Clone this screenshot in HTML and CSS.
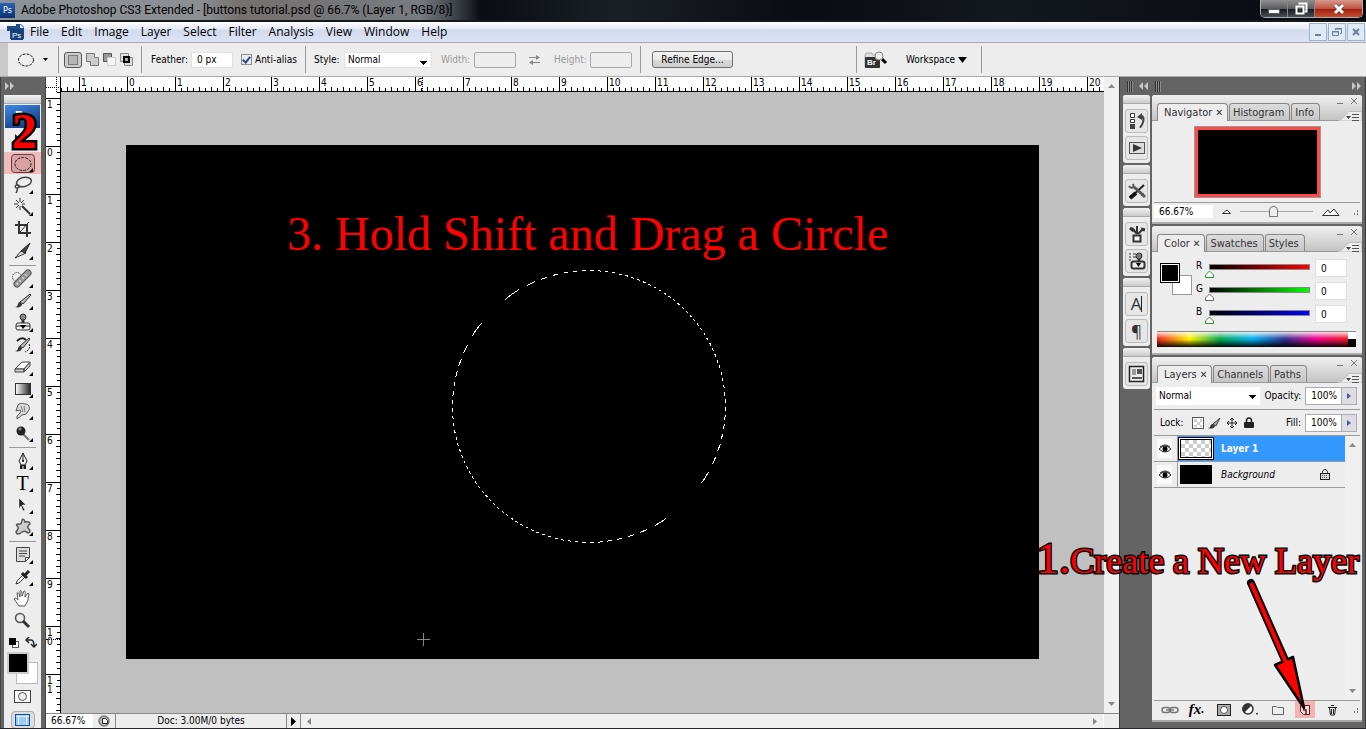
FILE: index.html
```html
<!DOCTYPE html>
<html lang="en">
<head>
  <meta charset="UTF-8">
  <meta name="viewport" content="width=device-width, initial-scale=1.0">
  <title>Adobe Photoshop CS3 Extended</title>
  <link rel="stylesheet" href="styles.css">
</head>
<body>

  <!-- Window title -->
  <header class="title-bar">
    <span class="ps-badge">Ps</span>
    <h1>Adobe Photoshop CS3 Extended - [buttons tutorial.psd @ 66.7% (Layer 1, RGB/8)]</h1>
    <div class="window-buttons">
      <button class="win-btn" aria-label="Minimize"><svg width="14" height="14"><rect x="1.500" y="7.500" width="11" height="4" fill="#fff" stroke="#555a66"/></svg></button>
      <button class="win-btn" aria-label="Restore"><svg width="14" height="14" fill="none"><path d="M4.500 1.500h8v8h-2" stroke="#fff" stroke-width="2"/><rect x="2.500" y="4.500" width="7" height="7" stroke="#fff" stroke-width="2"/><rect x="5" y="7" width="2" height="2" fill="#444"/></svg></button>
      <button class="win-btn close" aria-label="Close"><svg width="14" height="14"><path d="M3 3l8 8M11 3l-8 8" stroke="#5a3030" stroke-width="4"/><path d="M3 3l8 8M11 3l-8 8" stroke="#fff" stroke-width="3"/></svg></button>
    </div>
  </header>

  <!-- Menu -->
  <nav class="menu-bar">
    <svg class="doc-icon" width="17" height="17" viewBox="0 0 17 17"><path d="M0 2h9V0h5l3 3v12H3V7H0z" fill="#1d4c88"/><path d="M13 0l4 4h-4z" fill="#dfe8f5"/><rect x="4" y="5" width="12" height="11" fill="#164079"/><text x="5" y="14" font-size="8" fill="#fff" font-family="Liberation Sans, sans-serif">Ps</text></svg>
    <a href="#">File</a>
    <a href="#">Edit</a>
    <a href="#">Image</a>
    <a href="#">Layer</a>
    <a href="#">Select</a>
    <a href="#">Filter</a>
    <a href="#">Analysis</a>
    <a href="#">View</a>
    <a href="#">Window</a>
    <a href="#">Help</a>
    <div class="mdi-buttons">
      <button aria-label="Minimize document"><svg width="12" height="12"><path d="M3 9h6" stroke="#6b7f99" stroke-width="2"/></svg></button>
      <button aria-label="Restore document"><svg width="12" height="12" fill="none" stroke="#6b7f99"><path d="M4.500 4V2.500h6v5H9M4 3h7"/><path d="M1.500 5.500h6v4h-6zM1 6h7"/></svg></button>
      <button aria-label="Close document"><svg width="12" height="12"><path d="M3 3l6 6M9 3l-6 6" stroke="#6b7f99" stroke-width="2"/></svg></button>
    </div>
  </nav>

  <!-- Tool options -->
  <div class="options-bar">
    <div class="opt opt-tool">
      <svg width="18" height="14"><ellipse cx="9" cy="7" rx="7.500" ry="6" fill="none" stroke="#222" stroke-dasharray="3 1"/></svg>
      <svg width="5" height="3"><path d="M0 0h5L2.500 3z"/></svg>
    </div>
    <div class="opt opt-modes">
      <button class="mode active" aria-label="New selection"><svg width="12" height="12"><rect x="1.500" y="1.500" width="9" height="9" fill="#b5b5b5" stroke="#777"/></svg></button>
      <button class="mode" aria-label="Add to selection"><svg width="13" height="13"><path d="M.5.5h8v4h4v8h-8v-4h-4z" fill="#ccc" stroke="#777"/></svg></button>
      <button class="mode" aria-label="Subtract from selection"><svg width="13" height="13"><path d="M.5.5h8v4h-4v4h-4z" fill="#999" stroke="#555"/><path d="M4.500 4.500h8v8h-8z" fill="#f6f6f6" stroke="#ccc"/></svg></button>
      <button class="mode" aria-label="Intersect with selection"><svg width="13" height="13"><path d="M.5.5h8v8h-8zM4.500 4.500h8v8h-8z" fill="#ddd" stroke="#888"/><path d="M4 4h5v5H4z" fill="#aaa" stroke="#000" stroke-width="2"/></svg></button>
    </div>
    <div class="opt opt-feather">
      <label for="feather">Feather:</label>
      <input type="text" id="feather" class="field feather" value="0 px">
      <input type="checkbox" id="anti" class="tick" checked>
      <label for="anti">Anti-alias</label>
    </div>
    <div class="opt opt-style">
      <label for="style" class="lbl-style">Style:</label>
      <select id="style" class="field drop"><option>Normal</option></select>
      <label for="width" class="lbl-width off">Width:</label>
      <input type="text" id="width" class="field size" disabled>
      <svg class="swap" width="13" height="12" stroke="#888" fill="#888"><path d="M1 3.500h8M4 8.500h8"/><path d="M8 1l4 2.500L8 6zM5 6L1 8.500 5 11z" stroke="none"/></svg>
      <label for="height" class="lbl-height off">Height:</label>
      <input type="text" id="height" class="field size" disabled>
    </div>
    <div class="opt opt-refine"><button class="refine">Refine Edge...</button></div>
    <div class="opt opt-bridge">
      <button class="bridge" aria-label="Go to Bridge"><svg width="24" height="18"><path d="M1 4l1-2h6l1 2h6v12H1z" fill="#ddd" stroke="#aaa"/><rect x="1" y="6" width="15" height="11" rx="1" fill="#333"/><text x="3" y="14" font-size="8" font-weight="bold" fill="#fff" font-family="Liberation Sans, sans-serif">Br</text><path d="M18 8l4 4" stroke="#000" stroke-width="3"/><circle cx="15" cy="5" r="4" fill="#eee" stroke="#888"/></svg></button>
      <button class="workspace">Workspace <svg width="9" height="6"><path d="M0 0h9L4.500 6z"/></svg></button>
    </div>
    <div class="opt"></div>
  </div>

  <main class="work">

    <!-- Toolbox -->
    <aside class="toolbox">
      <div class="tool-head"><svg width="10" height="8" fill="#c8c8c8"><path d="M0 0l4 4-4 4zM5 0l4 4-4 4z"/></svg></div>
      <div class="tools">
        <div class="strip"></div>
        <div class="logo">Ps</div>
        <button class="tool" aria-label="Move"><svg width="24" height="22"><path d="M4 4l10 9H9l-5 5z" fill="#222"/></svg></button>
        <button class="tool marked more" aria-label="Elliptical marquee"><svg width="26" height="22"><rect x="1.500" y="2.500" width="23" height="18" rx="3" fill="#c98f8f" fill-opacity=".6" stroke="#5e3a3a"/><ellipse cx="13" cy="12" rx="8" ry="6.500" fill="none" stroke="#222" stroke-dasharray="3 1"/></svg></button>
        <button class="tool more" aria-label="Lasso"><svg width="24" height="22" fill="none" stroke="#444" stroke-width="1.500"><ellipse cx="13" cy="8" rx="7.500" ry="4.500" transform="rotate(-12 13 8)"/><path d="M7 11c-3-1-4 3-1 3s3-3 0-3M6 14c1 2 0 3-1 5"/></svg></button>
        <button class="tool more" aria-label="Magic wand"><svg width="24" height="22" stroke="#333"><path d="M9 2v4M9 10v4M3 8h4M11 8h3M5 4l3 3M13 4l-3 3M5 12l3-3"/><path d="M11 10l8 8" stroke-width="2"/></svg></button>
        <button class="tool" aria-label="Crop"><svg width="24" height="22" fill="none" stroke="#333" stroke-width="2"><path d="M8 3v12h12M4 7h12v12"/><path d="M9 14l9-10" stroke-width="1"/></svg></button>
        <button class="tool more" aria-label="Slice"><svg width="24" height="22"><path d="M4 18l7-8 4 3z" fill="#ddd" stroke="#333"/><path d="M10 11l9-8-5 10z" fill="#444" stroke="#222"/></svg></button>
        <hr>
        <button class="tool more" aria-label="Healing brush"><svg width="24" height="22"><circle cx="6" cy="9" r="4.500" fill="none" stroke="#222" stroke-dasharray="1 1"/><path d="M6 16L17 5" stroke="#555" stroke-width="7" stroke-linecap="round"/><path d="M6 16L17 5" stroke="#999" stroke-width="5" stroke-linecap="round"/><path d="M6 16L17 5" stroke="#eee" stroke-width="2" stroke-dasharray="1 3"/></svg></button>
        <button class="tool more" aria-label="Brush"><svg width="24" height="22"><path d="M4 17c4 0 2-5 5-5l2 2c0 3-4 4-7 3z" fill="#333"/><path d="M9 12l10-8 1 1-8 9z" fill="#bbb" stroke="#333"/></svg></button>
        <button class="tool more" aria-label="Clone stamp"><svg width="24" height="22"><circle cx="12" cy="5" r="3" fill="#888" stroke="#333"/><path d="M12 8v4" stroke="#333" stroke-width="3"/><rect x="5" y="11" width="14" height="7" rx="2" fill="#eee" stroke="#333"/><path d="M5 14h14" stroke="#333"/><path d="M9 13h6l-3 4z"/></svg></button>
        <button class="tool more" aria-label="History brush"><svg width="24" height="22"><path d="M4 17c4 0 2-4 5-5l2 2c0 3-4 4-7 3z" fill="#333"/><path d="M9 12l9-8 1 1-7 9z" fill="#bbb" stroke="#333"/><path d="M6 7c4-4 7-3 9-1" fill="none" stroke="#222" stroke-width="2"/><path d="M18 10c2 4-1 7-4 8" fill="none" stroke="#222" stroke-dasharray="2 1"/></svg></button>
        <button class="tool more" aria-label="Eraser"><svg width="24" height="22" stroke="#444"><path d="M4 13l7-7h8l-6 7z" fill="#fff"/><path d="M4 13h9v3H4zM13 13l6-7v4l-6 6z" fill="#ccc"/></svg></button>
        <button class="tool more" aria-label="Gradient"><svg width="24" height="22"><defs><linearGradient id="bw"><stop offset="0" stop-color="#fff"/><stop offset="1" stop-color="#222"/></linearGradient></defs><rect x="4.500" y="5.500" width="15" height="11" fill="url(#bw)" stroke="#333"/></svg></button>
        <button class="tool more" aria-label="Smudge"><svg width="24" height="22"><path d="M7 5c3-3 6-1 7-1 4 0 5 3 4 6l-3 4-4 1-5 4v-3l4-4-1-2-4 1z" fill="#ddd" stroke="#555"/><path d="M10 6l2 6M13 6l1 6" stroke="#777"/></svg></button>
        <button class="tool more" aria-label="Burn"><svg width="24" height="22"><path d="M12 12l6 6" stroke="#777" stroke-width="2"/><circle cx="10" cy="9" r="4.500" fill="#222"/><circle cx="9" cy="7" r="1.500" fill="#888"/></svg></button>
        <hr>
        <button class="tool more" aria-label="Pen"><svg width="24" height="22"><path d="M12 3l4 8-2 4h-4l-2-4z" fill="#eee" stroke="#222"/><path d="M12 3v8" stroke="#222"/><circle cx="12" cy="11" r="1"/><path d="M9 15h6v4H9z" fill="#222"/><path d="M12 16v3" stroke="#eee"/></svg></button>
        <button class="tool more type" aria-label="Type">T</button>
        <button class="tool more" aria-label="Path selection"><svg width="24" height="22"><path d="M8 4l7 7h-4l3 5-2 1-2-5-2 3z" fill="#222" stroke="#fff" stroke-width=".5"/></svg></button>
        <button class="tool more" aria-label="Custom shape"><svg width="24" height="22"><path d="M11 4q2-2 3 2 5-1 5 2-3 2-2 4 4 4 0 5-3-3-6-1-5 4-6 0 3-4 2-5-3-3 0-3 4 1 4-4z" fill="#ccc" stroke="#555" stroke-width="1.500"/></svg></button>
        <hr>
        <button class="tool more" aria-label="Notes"><svg width="24" height="22"><path d="M5.500 3.500h13v10l-4 4h-9z" fill="#ddd" stroke="#444"/><path d="M8 7h8M8 9.500h8M8 12h6" stroke="#444"/><path d="M14.500 17.500v-4h4z" fill="#fff" stroke="#444"/></svg></button>
        <button class="tool more" aria-label="Eyedropper"><svg width="24" height="22"><path d="M5 18l1-3 7-7 2 2-7 7z" fill="#fff" stroke="#333"/><path d="M11 7l5 5M14 9l4-4" stroke="#222" stroke-width="3"/></svg></button>
        <button class="tool" aria-label="Hand"><svg width="24" height="22"><path d="M8 18l-5-7c1-2 3 0 4 1L6 5c1-1 2 0 3 4V3c1-1 2 0 2 5l2-5c2 0 1 2 1 6l3-4c2 1 0 3 0 7l-3 6z" fill="#fff" stroke="#555"/></svg></button>
        <button class="tool" aria-label="Zoom"><svg width="24" height="22"><circle cx="9" cy="8" r="4.500" fill="#eee" stroke="#555" stroke-width="1.500"/><path d="M12 11l6 6" stroke="#333" stroke-width="3"/></svg></button>
        <div class="minis">
          <svg width="12" height="12"><rect x="4.500" y="4.500" width="6" height="6" fill="#fff" stroke="#555"/><rect x="1" y="1" width="7" height="7"/></svg>
          <svg width="12" height="12" fill="none" stroke="#222" stroke-width="1.500"><path d="M2 3h4q3 0 3 6"/><path d="M4 0L1 3l3 3M6 7l3 3 3-3"/></svg>
        </div>
        <div class="inks"><span class="ink back"></span><span class="ink front"></span></div>
        <button class="mask" aria-label="Quick mask"><svg width="17" height="13"><rect x=".5" y=".5" width="16" height="12" fill="#fff" stroke="#444"/><circle cx="8.500" cy="6.500" r="4" fill="#eee" stroke="#555"/></svg></button>
        <button class="screen" aria-label="Screen mode"><svg width="16" height="14"><rect x=".5" y="1.500" width="14" height="11" fill="#9cccf5" stroke="#124f96"/><path d="M1 3.500h13M3.500 2v10M11.500 2v10" stroke="#e6f3ff"/></svg></button>
      </div>
    </aside>

    <!-- Document window -->
    <section class="document">
      <div class="corner"></div>
      <div class="ruler-h">
        <span>1</span><span>0</span><span>1</span><span>2</span><span>3</span><span>4</span><span>5</span><span>6</span><span>7</span><span>8</span><span>9</span><span>10</span><span>11</span><span>12</span><span>13</span><span>14</span><span>15</span><span>16</span><span>17</span><span>18</span><span>19</span><span>20</span>
        <i class="track-x"></i>
      </div>
      <div class="scroll-v">
        <svg width="7" height="4"><path d="M0 4h7L3.500 0z" fill="#888"/></svg>
        <svg width="7" height="4"><path d="M0 0h7L3.500 4z" fill="#888"/></svg>
      </div>
      <div class="ruler-v">
        <span>1</span><span>0</span><span>1</span><span>2</span><span>3</span><span>4</span><span>5</span><span>6</span><span>7</span><span>8</span><span>9</span><span>1<br>0</span><span>1<br>1</span>
        <i class="track-y"></i>
      </div>
      <div class="stage">
        <div class="canvas">
          <p class="step-three">3. Hold Shift and Drag a Circle</p>
          <svg class="selection" width="280" height="280">
            <defs>
              <linearGradient id="ants" gradientUnits="userSpaceOnUse" x1=".8" y1=".8" x2="4.800" y2="4.800" spreadMethod="repeat">
                <stop offset="0" stop-color="#fff"/><stop offset=".5" stop-color="#fff"/>
                <stop offset=".5" stop-color="#000"/><stop offset="1" stop-color="#000"/>
              </linearGradient>
            </defs>
            <ellipse cx="140" cy="140.500" rx="136.500" ry="136" fill="none" stroke="url(#ants)" shape-rendering="crispEdges"/>
          </svg>
          <svg class="cross" width="13" height="13"><path d="M6.500 0v13M0 6.500h13" stroke="#888"/></svg>
        </div>
      </div>
      <footer class="status">
        <input type="text" class="zoom-level" value="66.67%" aria-label="Zoom level">
        <span class="cue"><svg width="12" height="12"><circle cx="6" cy="6" r="5" fill="#bbb" stroke="#777" stroke-width="1.500"/><path d="M4.500 3.500h3l2 2v3h-5z" fill="#fff" stroke="#222"/></svg></span>
        <span class="doc-size">Doc: 3.00M/0 bytes</span>
        <button class="doc-menu" aria-label="Status menu"><svg width="5" height="9"><path d="M0 0l5 4.500L0 9z"/></svg></button>
        <div class="scroll-h">
          <svg width="4" height="7"><path d="M4 0v7L0 3.500z" fill="#888"/></svg>
          <svg width="4" height="7"><path d="M0 0v7l4-3.500z" fill="#888"/></svg>
        </div>
      </footer>
    </section>

    <!-- Panel dock -->
    <aside class="dock">
      <div class="dock-head">
        <i class="grip"></i>
        <svg width="10" height="8" fill="#c8c8c8"><path d="M4 0L0 4l4 4zM9 0L5 4l4 4z"/></svg>
        <i class="grip"></i>
        <svg class="collapse" width="10" height="8" fill="#c8c8c8"><path d="M0 0l4 4-4 4zM5 0l4 4-4 4z"/></svg>
      </div>
      <div class="dock-body">
        <div class="icon-col">
          <div class="icon-group">
            <button aria-label="History"><svg width="18" height="18"><path d="M2.500 1.500h4v4h-4zM2.500 7.500h4v3h-4z" fill="#fff" stroke="#333"/><rect x="2" y="12" width="5" height="5" fill="#444"/><path d="M9 5l5-4v2c4 1 3 8-1 13-2 0-2-1-1-2 2-3 3-6 2-8v2z" fill="#444"/></svg></button>
            <button aria-label="Actions"><svg width="18" height="18"><rect x="1.500" y="3.500" width="15" height="11" fill="#ddd" stroke="#555"/><path d="M5 5l9 4-9 4z" fill="#333"/></svg></button>
          </div>
          <div class="icon-group">
            <button aria-label="Tool presets"><svg width="18" height="18"><path d="M2 16L16 3" stroke="#222" stroke-width="2"/><path d="M6 5l9 8" stroke="#555" stroke-width="3"/><path d="M14 12l3 3" stroke="#555" stroke-width="3"/><path d="M2 16l6-5" stroke="#111" stroke-width="4"/><path d="M1 4c2 3 6 2 4-2" fill="none" stroke="#555" stroke-width="2"/></svg></button>
          </div>
          <div class="icon-group">
            <button aria-label="Brushes"><svg width="18" height="18" stroke="#333"><path d="M9 9L4 3M9 9V1M10 9l5-5" stroke-width="2"/><path d="M2 3l4 3M13 4l4 1" stroke-width="3"/><rect x="5.500" y="10.500" width="7" height="6" fill="#fff" stroke-width="2"/></svg></button>
            <button aria-label="Clone source"><svg width="18" height="18"><path d="M1 2h2M5 2h3M1 5h2M5 5h3M1 8h2" stroke="#333"/><circle cx="11" cy="4" r="3" fill="#777" stroke="#333"/><path d="M11 7v3" stroke="#333" stroke-width="3"/><rect x="3.500" y="9.500" width="13" height="7" rx="2" fill="#eee" stroke="#333" stroke-width="2"/><path d="M8 11h5l-2.500 4z"/></svg></button>
          </div>
          <div class="icon-group">
            <button aria-label="Character">A<b></b></button>
            <button aria-label="Paragraph">¶</button>
          </div>
          <div class="icon-group">
            <button aria-label="Layer comps"><svg width="18" height="18"><rect x="1.500" y="1.500" width="14" height="15" fill="#eee" stroke="#222" stroke-width="1.500"/><path d="M4 5h4M4 7h4M4 9h4" stroke="#444"/><path d="M9 4h5v5H9zM4 12h10v2H4z" fill="#555"/></svg></button>
          </div>
        </div>

        <div class="panels">
          <section class="panel navigator">
            <div class="tabs">
              <button class="tab on">Navigator <span>✕</span></button><button class="tab">Histogram</button><button class="tab">Info</button>
              <span class="panel-ctl"><svg width="22" height="9" fill="none" stroke="#777"><path d="M0 6.500h6"/><path d="M14 1l6 6M20 1l-6 6"/></svg></span>
              <span class="panel-menu"><svg width="24" height="10"><path d="M0 9.500h2L11 .5h13V10H0z" fill="#ededed" stroke="#bbb"/><path d="M8 5h5l-2.500 3z" fill="#444"/><path d="M14 3.500h7M14 6.500h7M14 9.500h7" stroke="#555"/></svg></span>
            </div>
            <div class="nav-view"><div class="nav-thumb"></div></div>
            <div class="nav-foot">
              <input type="text" value="66.67%" aria-label="Navigator zoom">
              <svg width="9" height="5"><path d="M.5 4.500h8L5 1z" fill="#fff" stroke="#333"/></svg>
              <input type="range" min="0" max="100" value="46" aria-label="Zoom slider">
              <svg width="18" height="8"><path d="M.5 7.500L6 2l2 3 4-4 5 6.500z" fill="#fff" stroke="#333"/></svg>
              <i class="resize"></i>
            </div>
          </section>

          <section class="panel color">
            <div class="tabs">
              <button class="tab on">Color <span>✕</span></button><button class="tab">Swatches</button><button class="tab">Styles</button>
              <span class="panel-ctl"><svg width="22" height="9" fill="none" stroke="#777"><path d="M0 6.500h6"/><path d="M14 1l6 6M20 1l-6 6"/></svg></span>
              <span class="panel-menu"><svg width="24" height="10"><path d="M0 9.500h2L11 .5h13V10H0z" fill="#ededed" stroke="#bbb"/><path d="M8 5h5l-2.500 3z" fill="#444"/><path d="M14 3.500h7M14 6.500h7M14 9.500h7" stroke="#555"/></svg></span>
            </div>
            <div class="mixer">
              <div class="pair"><span class="chip back"></span><span class="chip front"></span></div>
              <div class="channels">
                <div class="channel"><label for="r">R</label><div class="ramp red"><svg width="9" height="8"><path d="M4.500 1L8.500 5v2.500h-8V5z" fill="#fff" stroke="#2a9c2a"/></svg></div><input type="text" id="r" value="0"></div>
                <div class="channel"><label for="g">G</label><div class="ramp green"><svg width="9" height="8"><path d="M4.500 1L8.500 5v2.500h-8V5z" fill="#fff" stroke="#666"/></svg></div><input type="text" id="g" value="0"></div>
                <div class="channel"><label for="b">B</label><div class="ramp blue"><svg width="9" height="8"><path d="M4.500 1L8.500 5v2.500h-8V5z" fill="#fff" stroke="#2a9c2a"/></svg></div><input type="text" id="b" value="0"></div>
              </div>
            </div>
            <div class="spectrum"><div class="hues"></div><div class="ends"></div></div>
          </section>

          <section class="panel layers">
            <div class="tabs">
              <button class="tab on">Layers <span>✕</span></button><button class="tab">Channels</button><button class="tab">Paths</button>
              <span class="panel-ctl"><svg width="22" height="9" fill="none" stroke="#777"><path d="M0 6.500h6"/><path d="M14 1l6 6M20 1l-6 6"/></svg></span>
              <span class="panel-menu"><svg width="24" height="10"><path d="M0 9.500h2L11 .5h13V10H0z" fill="#ededed" stroke="#bbb"/><path d="M8 5h5l-2.500 3z" fill="#444"/><path d="M14 3.500h7M14 6.500h7M14 9.500h7" stroke="#555"/></svg></span>
            </div>
            <div class="layer-opts blending">
              <select class="drop blend" aria-label="Blend mode"><option>Normal</option></select>
              <label for="opacity">Opacity:</label>
              <span class="percent"><input type="text" id="opacity" value="100%"><button aria-label="Opacity slider"><svg width="4" height="6"><path d="M0 0l4 3-4 3z" fill="#4a5a9a"/></svg></button></span>
            </div>
            <div class="layer-opts locks">
              <span class="lock-label">Lock:</span>
              <button aria-label="Lock transparent pixels"><svg width="12" height="12"><rect x=".5" y=".5" width="11" height="11" fill="#fff" stroke="#555"/><path d="M2 2h3v3H2zM5 5h3v3H5zM8 2h2v3H8zM2 8h3v2H2zM8 8h2v2H8z" fill="#ccc"/></svg></button>
              <button aria-label="Lock image pixels"><svg width="13" height="12"><path d="M0 11c4 0 1-4 5-4l2 2c-1 3-5 3-7 2z" fill="#333"/><path d="M5 7l7-6-4 8z" fill="#aaa" stroke="#444"/></svg></button>
              <button aria-label="Lock position"><svg width="12" height="12"><path d="M6 1v10M1 6h10M4 3l2-2 2 2M4 9l2 2 2-2M3 4L1 6l2 2M9 4l2 2-2 2" fill="none" stroke="#222"/></svg></button>
              <button aria-label="Lock all"><svg width="10" height="12"><path d="M2.500 6V4c0-4 5-4 5 0v2" fill="none" stroke="#222" stroke-width="1.500"/><rect x="0" y="5" width="10" height="6" rx="1" fill="#222"/></svg></button>
              <label for="fill" class="fill-label">Fill:</label>
              <span class="percent"><input type="text" id="fill" value="100%"><button aria-label="Fill slider"><svg width="4" height="6"><path d="M0 0l4 3-4 3z" fill="#4a5a9a"/></svg></button></span>
            </div>
            <div class="layer-area">
              <ul class="layer-list">
                <li class="layer selected">
                  <span class="eye"><svg width="12" height="9"><path d="M0 5q6-6 12 0-6 6-12 0z" fill="#fff" stroke="#222"/><path d="M1 3q5-4 10 0" fill="none" stroke="#222"/><circle cx="6" cy="5" r="2.500"/></svg></span>
                  <span class="frame"><span class="thumb checker"></span></span>
                  <span class="name">Layer 1</span>
                </li>
                <li class="layer">
                  <span class="eye"><svg width="12" height="9"><path d="M0 5q6-6 12 0-6 6-12 0z" fill="#fff" stroke="#222"/><path d="M1 3q5-4 10 0" fill="none" stroke="#222"/><circle cx="6" cy="5" r="2.500"/></svg></span>
                  <span class="frame"><span class="thumb"></span></span>
                  <span class="name">Background</span>
                  <svg class="padlock" width="10" height="11"><path d="M2.500 5V3.500c0-4 5-4 5 0V5" fill="none" stroke="#222"/><rect x=".5" y="4.500" width="9" height="6" fill="#ddd" stroke="#222"/><path d="M2 6.500h6M2 8.500h6" stroke="#555" stroke-dasharray="1 1"/></svg>
                </li>
              </ul>
              <div class="layer-scroll">
                <svg width="7" height="4"><path d="M0 4h7L3.500 0z" fill="#888"/></svg>
                <svg width="7" height="4"><path d="M0 0h7L3.500 4z" fill="#888"/></svg>
              </div>
            </div>
            <div class="layer-foot">
              <button aria-label="Link layers"><svg width="18" height="8" fill="none" stroke="#777" stroke-width="1.500"><rect x="1" y="1.500" width="8" height="5" rx="2.500"/><rect x="9" y="1.500" width="8" height="5" rx="2.500"/><path d="M5 4h8"/></svg></button>
              <button class="fx" aria-label="Layer style">fx<small>.</small></button>
              <button aria-label="Layer mask"><svg width="14" height="12"><rect x=".5" y=".5" width="13" height="11" fill="#aaa" stroke="#222"/><circle cx="7" cy="6" r="3.500" fill="#fff" stroke="#555"/></svg></button>
              <button aria-label="Adjustment layer"><svg width="17" height="13"><circle cx="6" cy="6" r="5" fill="#fff" stroke="#333" stroke-width="1.500"/><path d="M10 2L2 10A5 5 0 0 1 10 2z" fill="#333"/><path d="M14 10h2l-1 2z"/></svg></button>
              <button aria-label="New group"><svg width="12" height="10"><path d="M.5 1.500h4l1 1h6v7H.5z" fill="#eee" stroke="#666"/></svg></button>
              <button class="new-layer" aria-label="New layer"><svg width="12" height="12"><path d="M1.500 1.500h9v9h-6l-3-3z" fill="#ffd9d9" stroke="#5b2222"/><path d="M4 6h3v4" fill="none" stroke="#5b2222" stroke-width="1.500"/></svg></button>
              <button aria-label="Delete layer"><svg width="11" height="12" fill="none" stroke="#222"><path d="M1 3.500h9M4 1.500h3M2.500 4l1 7h4l1-7M4.500 5v5M6.500 5v5"/></svg></button>
              <i class="resize"></i>
            </div>
          </section>
        </div>
      </div>
    </aside>
  </main>

  <!-- Tutorial notes lying over the window -->
  <span class="note step-two">2</span>
  <span class="note step-one"><b>1.</b>Create a New Layer</span>
  <svg class="arrow" width="64" height="134"><path d="M6 5L40 82" stroke="#000" stroke-width="8" stroke-linecap="round"/><path d="M30 87l18-8 11 51z" fill="red" stroke="#000" stroke-width="2.500" stroke-linejoin="round"/><path d="M6 5L42 87" stroke="red" stroke-width="4"/></svg>

</body>
</html>
```

FILE: styles.css
```css
*,
*::before,
*::after {
  box-sizing: border-box;
}

body {
  margin: 0;
  height: 100vh;
  display: flex;
  flex-direction: column;
  overflow: hidden;
  position: relative;
  background: #ededed;
  border-bottom: 1px solid #26262c;
  font-family: "DejaVu Sans Condensed", "Open Sans", sans-serif;
  font-size: 10px;
  line-height: 14px;
  color: #000;
}

button, input, select {
  font: inherit;
  color: inherit;
  margin: 0;
  padding: 0;
  border: none;
  background: none;
  border-radius: 0;
}

button {
  display: flex;
  align-items: center;
  justify-content: center;
}

svg {
  display: block;
  flex: none;
}

/* Title bar */
.title-bar {
  height: 22px;
  flex: none;
  display: flex;
  align-items: center;
  gap: 6px;
  background: linear-gradient(90deg, #8b9299 0, #8c8f92 200px, #74706e 240px, #777b80 420px, #3a3f44 458px, #0a0e12 480px, #1b2026 620px, #090c10 800px, #14191e 1000px, #06090d 100%);
  border-bottom: 2px solid #15171a;
}

.title-bar h1 {
  margin: 0;
  font: normal 12px/20px Roboto, sans-serif;
  white-space: nowrap;
}

.ps-badge {
  width: 15px;
  height: 15px;
  background: linear-gradient(#2b63b4, #0c2f6e);
  color: #fff;
  font-size: 9px;
  text-align: center;
}

.window-buttons {
  display: flex;
  align-self: flex-start;
  margin: 0 3px 0 auto;
  height: 18px;
  border: 1px solid #a9aeb3;
  border-top: none;
  border-radius: 0 0 5px 5px;
  overflow: hidden;
}

.win-btn {
  width: 27px;
  border-right: 1px solid #888;
  background: linear-gradient(#8f8f90, #5d5d60 50%, #191b20 55%, #4b4e53);
}

.win-btn.close {
  width: 47px;
  border: none;
  background: linear-gradient(#d79a8e, #c0513f 50%, #a32110 55%, #c74c2c);
}

/* Menu bar */
.menu-bar {
  height: 20px;
  flex: none;
  display: flex;
  align-items: center;
  gap: 12px;
  padding-left: 7px;
  background: linear-gradient(#fff, #e4e9f5 35%, #d3daed 40%, #dde3f6);
  font: 12px/18px "Open Sans", sans-serif;
}

.menu-bar a {
  color: #000;
  text-decoration: none;
}

.doc-icon {
  margin-right: -6px;
}

.mdi-buttons {
  display: flex;
  gap: 1px;
  margin: 0 1px 0 auto;
}

.mdi-buttons button {
  width: 18px;
  height: 18px;
  border: 1px solid #9fb2c8;
  background: #dfeaf7;
}

/* Options bar */
.options-bar {
  height: 35px;
  flex: none;
  display: grid;
  grid-template-columns: 58px 83px 164px 335px 216px 125px 1fr;
  align-items: center;
  border-top: 1px solid #aaa;
  border-bottom: 1px solid #aaa;
  background: #ededed;
}

.opt {
  height: 27px;
  display: flex;
  align-items: center;
  border-left: 1px solid #999;
}

.opt-tool {
  height: 33px;
  border-left: 8px solid #c9c9c9;
  padding-left: 9px;
  gap: 8px;
}

.opt-modes {
  padding-left: 5px;
  gap: 4px;
}

.mode.active {
  width: 18px;
  height: 16px;
  border: 1px solid #555;
  border-radius: 3px;
  background: #ccc;
}

.opt-feather {
  padding-left: 9px;
}

.opt label {
  white-space: nowrap;
}

.off {
  color: #999;
}

.field {
  height: 16px;
  background: #fff;
  border: 1px solid #e2e3ea;
}

.feather {
  width: 42px;
  margin: 0 8px 0 3px;
  padding-left: 5px;
}

.tick {
  appearance: none;
  width: 11px;
  height: 11px;
  margin-right: 3px;
  border: 1px solid #8e8f8f;
  background: #e8eaf0;
}

.tick:checked::before {
  content: "";
  display: block;
  width: 5px;
  height: 8px;
  margin-left: 2px;
  border: solid #2b4b8e;
  border-width: 0 2px 2px 0;
  transform: rotate(40deg);
}

.opt-style {
  padding-left: 8px;
}

.lbl-style {
  width: 30px;
}

.lbl-width {
  width: 33px;
  margin-left: 9px;
}

.lbl-height {
  width: 36px;
  margin-left: 13px;
}

.drop {
  appearance: none;
  width: 88px;
  padding-left: 3px;
  background-color: #fff;
  background-image: linear-gradient(to bottom right, #000 50%, transparent 50%), linear-gradient(to bottom left, #000 50%, transparent 50%);
  background-repeat: no-repeat;
  background-size: 4px 4px;
  background-position: right 3px top 8px, right 7px top 8px;
}

.size {
  width: 42px;
  border: 1px solid #aaa;
  border-radius: 2px;
  background: #ededed;
}

.swap {
  margin-left: 12px;
}

.opt-refine {
  padding-left: 11px;
}

.refine {
  width: 81px;
  height: 17px;
  border: 1px solid #707070;
  border-radius: 3px;
  background: linear-gradient(#f2f2f2, #e9e9e9 50%, #d8d8d8 55%, #cfcfcf);
}

.opt-bridge {
  padding-left: 7px;
  gap: 18px;
}

.workspace {
  gap: 3px;
}

/* Work area */
.work {
  flex: 1;
  min-height: 0;
  display: flex;
}

/* Toolbox */
.toolbox {
  width: 46px;
  flex: none;
  display: flex;
  flex-direction: column;
  padding: 0 4px;
  background: #646464;
  border-right: 1px solid #444;
  border-left: 1px solid #444;
}

.tool-head {
  height: 18px;
  flex: none;
  display: flex;
  align-items: center;
}

.tools {
  flex: 1;
  min-height: 0;
  margin: 0 0 0 -1px;
  overflow: hidden;
  background: #ededed;
}

.strip {
  height: 9px;
  margin-bottom: 1px;
  border-radius: 3px 3px 0 0;
  border-bottom: 1px solid #aaa;
  background: linear-gradient(#f4f4f4, #cfcfcf);
}

.logo {
  height: 23px;
  margin: 0 1px 2px;
  background: linear-gradient(160deg, #3f8aea, #0c2f6e);
  color: #fff;
  font-size: 13px;
  font-weight: bold;
  line-height: 22px;
  text-align: center;
}

.tool {
  width: 100%;
  height: 22px;
  position: relative;
}

.tool.marked {
  background: #f3bcbc;
}

.tool.more::after {
  content: "";
  position: absolute;
  right: 8px;
  bottom: 2px;
  border: 2px solid #000;
  border-top-color: transparent;
  border-left-color: transparent;
}

.type {
  font: 20px/22px "Liberation Serif", serif;
}

.tools hr {
  height: 1px;
  margin: 3px 5px 2px;
  border: none;
  background: #999;
}

.minis {
  display: flex;
  gap: 5px;
  margin: 5px 0 0 4px;
}

.inks {
  position: relative;
  width: 31px;
  height: 32px;
  margin: 3px 0 6px 3px;
}

.ink {
  position: absolute;
  width: 22px;
  height: 22px;
  border: 1px solid #bbb;
  background: #fff;
}

.ink.back {
  right: 0;
  bottom: 0;
}

.ink.front {
  top: 0;
  left: 0;
  border: 2px solid #ccc;
  background: #000;
}

.mask {
  margin: 0 auto 8px;
}

.screen {
  width: 24px;
  height: 18px;
  margin: 0 auto;
  border: 1px solid #aaa;
  border-radius: 4px;
  background: #ddd;
}

/* Document, rulers and scroll bars */
.document {
  flex: 1;
  min-width: 0;
  display: grid;
  grid-template: 15px 1fr 15px / 15px 1fr 15px;
}

.corner {
  background: linear-gradient(90deg, #000 50%, transparent 50%) 0 10px / 2px 1px repeat-x, linear-gradient(#000 50%, transparent 50%) 10px 0 / 1px 2px repeat-y, #fff;
}

.ruler-h {
  position: relative;
  display: flex;
  padding-left: 18px;
  overflow: hidden;
  border-left: 1px solid #000;
  border-bottom: 1px solid #000;
  margin-left: -1px;
  background: linear-gradient(90deg, #000 1px, transparent 1px) 0 11px / 6px 3px repeat-x, linear-gradient(90deg, #000 1px, transparent 1px) 18px 10px / 12px 4px repeat-x, #fff;
}

.ruler-h span {
  width: 48px;
  height: 14px;
  flex: none;
  padding-left: 1px;
  border-left: 1px solid #000;
  line-height: 11px;
}

.ruler-v {
  grid-column: 1;
  grid-row: 2;
  position: relative;
  padding-top: 6px;
  overflow: hidden;
  border-right: 1px solid #000;
  background: linear-gradient(#000 1px, transparent 1px) 11px 0 / 3px 6px repeat-y, linear-gradient(#000 1px, transparent 1px) 10px 6px / 4px 12px repeat-y, #fff;
}

.ruler-v span {
  display: block;
  height: 48px;
  padding: 1px 0 0 1px;
  border-top: 1px solid #000;
  line-height: 9px;
}

.track-x {
  position: absolute;
  left: 361px;
  top: 0;
  height: 14px;
  border-left: 1px dotted #000;
}

.track-y {
  position: absolute;
  left: 0;
  top: 547px;
  width: 14px;
  border-top: 1px dotted #000;
}

.scroll-v {
  grid-column: 3;
  grid-row: 1 / 3;
  display: flex;
  flex-direction: column;
  align-items: center;
  justify-content: space-between;
  padding: 7px 0;
  background: #f0f0f0;
}

.stage {
  min-width: 0;
  min-height: 0;
  display: flex;
  align-items: center;
  justify-content: center;
  padding-bottom: 1px;
  overflow: hidden;
  background: #c0c0c0;
}

.canvas {
  position: relative;
  width: 913px;
  height: 514px;
  flex: none;
  background: #000;
}

.step-three {
  position: absolute;
  left: 161px;
  top: 62px;
  margin: 0;
  color: red;
  font: 48px/54px "Liberation Serif", serif;
  white-space: nowrap;
}

.selection {
  position: absolute;
  left: 323px;
  top: 121px;
}

.cross {
  position: absolute;
  left: 291px;
  top: 488px;
}

.status {
  grid-column: 1 / 4;
  display: flex;
  border-top: 1px solid #888;
  background: #ededed;
}

.zoom-level {
  width: 47px;
  padding-left: 5px;
  background: #fff;
}

.cue {
  width: 22px;
  display: flex;
  align-items: center;
  justify-content: center;
}

.doc-size {
  width: 172px;
  border: solid #888;
  border-width: 0 1px;
  text-align: center;
}

.doc-menu {
  width: 14px;
  border-right: 1px solid #888;
}

.scroll-h {
  flex: 1;
  display: flex;
  align-items: center;
  justify-content: space-between;
  padding: 0 6px;
  border-right: 1px solid #fff;
  margin-right: 15px;
  background: #f0f0f0;
}

/* Dock */
.dock {
  width: 247px;
  flex: none;
  display: flex;
  flex-direction: column;
  padding: 0 3px;
  background: #646464;
  border: solid #3c3c3c;
  border-width: 0 1px;
}

.dock-head {
  height: 18px;
  flex: none;
  display: flex;
  align-items: center;
  gap: 6px;
  padding-left: 4px;
}

.grip {
  width: 6px;
  height: 11px;
  background: repeating-linear-gradient(90deg, #333 0, #333 1px, #8a8a8a 1px, #8a8a8a 2px);
}

.collapse {
  margin-left: auto;
}

.dock-body {
  flex: 1;
  min-height: 0;
  display: flex;
  gap: 2px;
}

.icon-col {
  width: 27px;
  display: flex;
  flex-direction: column;
  gap: 2px;
}

.icon-group {
  display: flex;
  flex-direction: column;
  align-items: center;
  gap: 3px;
  padding-bottom: 3px;
  background: #ededed;
  border-radius: 3px;
}

.icon-group::before {
  content: "";
  width: 100%;
  height: 9px;
  margin-bottom: 2px;
  border-radius: 3px 3px 0 0;
  border-bottom: 1px solid #aaa;
  background: linear-gradient(#f2f2f2, #cacaca);
}

.icon-group button {
  width: 23px;
  height: 24px;
  border: 1px solid #bbb;
  border-radius: 3px;
  background: #e6e6e6;
  color: #333;
  font: 17px/20px "Open Sans", sans-serif;
}

.icon-group b {
  width: 1px;
  height: 16px;
  background: #222;
}

.panels {
  flex: 1;
  min-width: 0;
  display: flex;
  flex-direction: column;
  gap: 2px;
  padding-bottom: 6px;
}

.panel {
  height: 129px;
  flex: none;
  display: flex;
  flex-direction: column;
  overflow: hidden;
  padding-bottom: 2px;
  border-radius: 3px 3px 0 0;
  border-bottom: 2px solid #aaa;
  background: #ededed;
}

.panel.layers {
  height: auto;
  flex: 1;
  min-height: 0;
}

.tabs {
  position: relative;
  height: 26px;
  flex: none;
  display: flex;
  align-items: flex-end;
  gap: 1px;
  padding-left: 5px;
  border-bottom: 1px solid #999;
  background: linear-gradient(#f0f0f0, #c4c4c4);
}

.tab {
  height: 17px;
  padding: 2px 4px 0;
  border: 1px solid #888;
  border-bottom: none;
  border-radius: 3px 4px 0 0;
  background: linear-gradient(#dcdcdc, #c6c6c6);
  color: #333;
  font-size: 11px;
  white-space: nowrap;
}

.tab + .tab {
  padding: 2px 5px 0 3px;
}

.tab.on {
  height: 18px;
  margin-bottom: -1px;
  padding: 1px 4px 0 6px;
  background: #ededed;
}

.tab span {
  margin-left: 3px;
  font-size: 10px;
}

.panel-ctl {
  position: absolute;
  right: 3px;
  top: 2px;
}

.panel-menu {
  position: absolute;
  right: 0;
  bottom: -1px;
}

/* Navigator */
.nav-view {
  flex: 1;
  display: flex;
  align-items: center;
  justify-content: center;
}

.nav-thumb {
  width: 127px;
  height: 72px;
  border: 1px solid #999;
  outline: 3px solid #ff4a4a;
  outline-offset: -4px;
  background: #000;
}

.nav-foot {
  display: flex;
  align-items: center;
  height: 18px;
  margin: 0 2px;
  gap: 9px;
  border-top: 1px solid #999;
}

.nav-foot input[type="text"] {
  width: 59px;
  height: 13px;
  padding-left: 5px;
  background: #fff;
}

.nav-foot input[type="range"] {
  appearance: none;
  width: 73px;
  height: 1px;
  background: #aaa;
}

.nav-foot input[type="range"]::-webkit-slider-thumb {
  appearance: none;
  width: 9px;
  height: 11px;
  border: 1px solid #777;
  border-radius: 4px 4px 0 0;
  background: #eee;
}

.resize {
  width: 9px;
  height: 9px;
  flex: none;
  margin-left: auto;
  background: conic-gradient(transparent 75%, #777 0) 0 0 / 3px 3px;
  clip-path: polygon(100% 0, 100% 100%, 0 100%);
}

/* Color */
.mixer {
  flex: 1;
  display: flex;
  padding: 7px 15px 0 8px;
}

.pair {
  position: relative;
  width: 32px;
  height: 32px;
  margin: 4px 4px 0 0;
}

.chip {
  position: absolute;
  width: 20px;
  height: 20px;
  border: 1px solid #999;
  background: #fff;
}

.chip.back {
  right: 0;
  bottom: 0;
}

.chip.front {
  left: 0;
  top: 0;
  border: 1px solid #000;
  box-shadow: inset 0 0 0 1px #fff;
  background: #000;
}

.channels {
  flex: 1;
}

.channel {
  display: flex;
  height: 23px;
}

.channel label {
  width: 13px;
}

.channel input {
  width: 32px;
  height: 18px;
  margin-left: auto;
  padding-left: 5px;
  border: 1px solid #dcdfe6;
  background: #fff;
}

.ramp {
  position: relative;
  width: 101px;
  height: 6px;
  margin-top: 5px;
  border: 1px solid #888;
}

.ramp svg {
  position: absolute;
  left: -5px;
  top: 5px;
}

.ramp.red {
  background: linear-gradient(90deg, #000, #f00);
}

.ramp.green {
  background: linear-gradient(90deg, #000, #0f0);
}

.ramp.blue {
  background: linear-gradient(90deg, #000, #00f);
}

.spectrum {
  display: flex;
  height: 16px;
  margin: 0 6px 4px 5px;
  border-top: 1px solid #888;
}

.hues {
  flex: 1;
  background: linear-gradient(rgba(255, 255, 255, .85), rgba(255, 255, 255, 0) 45%, rgba(0, 0, 0, 0) 50%, rgba(0, 0, 0, .95)), linear-gradient(90deg, #e22, #fe0 17%, #00a650 33%, #00aeef 50%, #2e3192 67%, #ec008c 83%, #ed1c24);
}

.ends {
  width: 8px;
  background: linear-gradient(#fff 50%, #000 50%);
}

/* Layers */
.layer-opts {
  height: 26px;
  flex: none;
  display: flex;
  align-items: center;
  margin: 0 2px;
  padding: 0 3px 0 2px;
  gap: 4px;
  border-bottom: 1px solid #999;
}

.blending {
  height: 27px;
}

.blend {
  width: 105px;
  height: 18px;
}

.percent {
  display: flex;
  width: 52px;
  height: 18px;
  margin-left: auto;
  border: 1px solid #a9aab4;
}

.percent input {
  width: 35px;
  padding-left: 5px;
  background: #fff;
}

.percent button {
  flex: 1;
  border-left: 1px solid #a9aab4;
  background: #dedee2;
}

.locks button {
  width: 13px;
}

.lock-label {
  width: 31px;
  padding-left: 4px;
}

.fill-label {
  margin-left: auto;
}

.locks .percent {
  margin-left: 0;
}

.layer-area {
  flex: 1;
  min-height: 0;
  display: flex;
  margin: 0 2px;
}

.layer-list {
  flex: 1;
  margin: 0;
  padding: 0;
  list-style: none;
}

.layer {
  height: 26px;
  display: flex;
  align-items: center;
  border-bottom: 1px solid #999;
}

.eye {
  width: 23px;
  height: 25px;
  display: flex;
  align-items: center;
  justify-content: center;
  border: 3px solid #ededed;
  border-right: 5px solid #ededed;
  background: #fafafa;
  box-shadow: 1px 0 #999;
}

.frame {
  width: 36px;
  height: 23px;
  margin: 0 7px 0 1px;
  padding: 2px;
}

.selected .frame {
  padding: 1px;
  border: 1px solid #000;
  background: #fff;
}

.thumb {
  display: block;
  height: 19px;
  background: #000;
}

.thumb.checker {
  border: 1px solid #000;
  background: repeating-conic-gradient(#ccc 0 25%, #fff 0 50%) 0 0 / 8px 8px;
}

.name {
  font-style: italic;
}

.selected {
  background: #3399ff;
}

.selected .name {
  color: #fff;
  font-style: normal;
  font-weight: bold;
}

.padlock {
  margin: 0 15px 0 auto;
}

.layer-scroll {
  width: 15px;
  display: flex;
  flex-direction: column;
  align-items: center;
  justify-content: space-between;
  padding: 7px 0;
  background: #f0f0f0;
}

.layer-foot {
  height: 18px;
  flex: none;
  display: flex;
  align-items: center;
  margin: 0 2px;
  padding-left: 2px;
  border-top: 1px solid #999;
}

.layer-foot button {
  width: 27px;
  height: 17px;
}

.layer-foot .fx {
  font: italic bold 15px/15px "Liberation Serif", serif;
}

.layer-foot .new-layer {
  width: 20px;
  margin: 0 4px;
  background: #f3b3b3;
}

/* Notes */
.note {
  position: absolute;
  color: red;
  font-family: "Liberation Serif", serif;
  -webkit-text-stroke: 3px #000;
  paint-order: stroke fill;
  white-space: nowrap;
}

.step-two {
  left: 12px;
  top: 108px;
  font-size: 50px;
  font-weight: bold;
  line-height: 46px;
  -webkit-text-stroke-width: 5px;
}

.step-one {
  right: 7px;
  top: 533px;
  font-size: 36px;
  line-height: 50px;
}

.step-one b {
  font-size: 45px;
  font-weight: normal;
}

.arrow {
  position: absolute;
  right: 57px;
  bottom: 16px;
}
```
